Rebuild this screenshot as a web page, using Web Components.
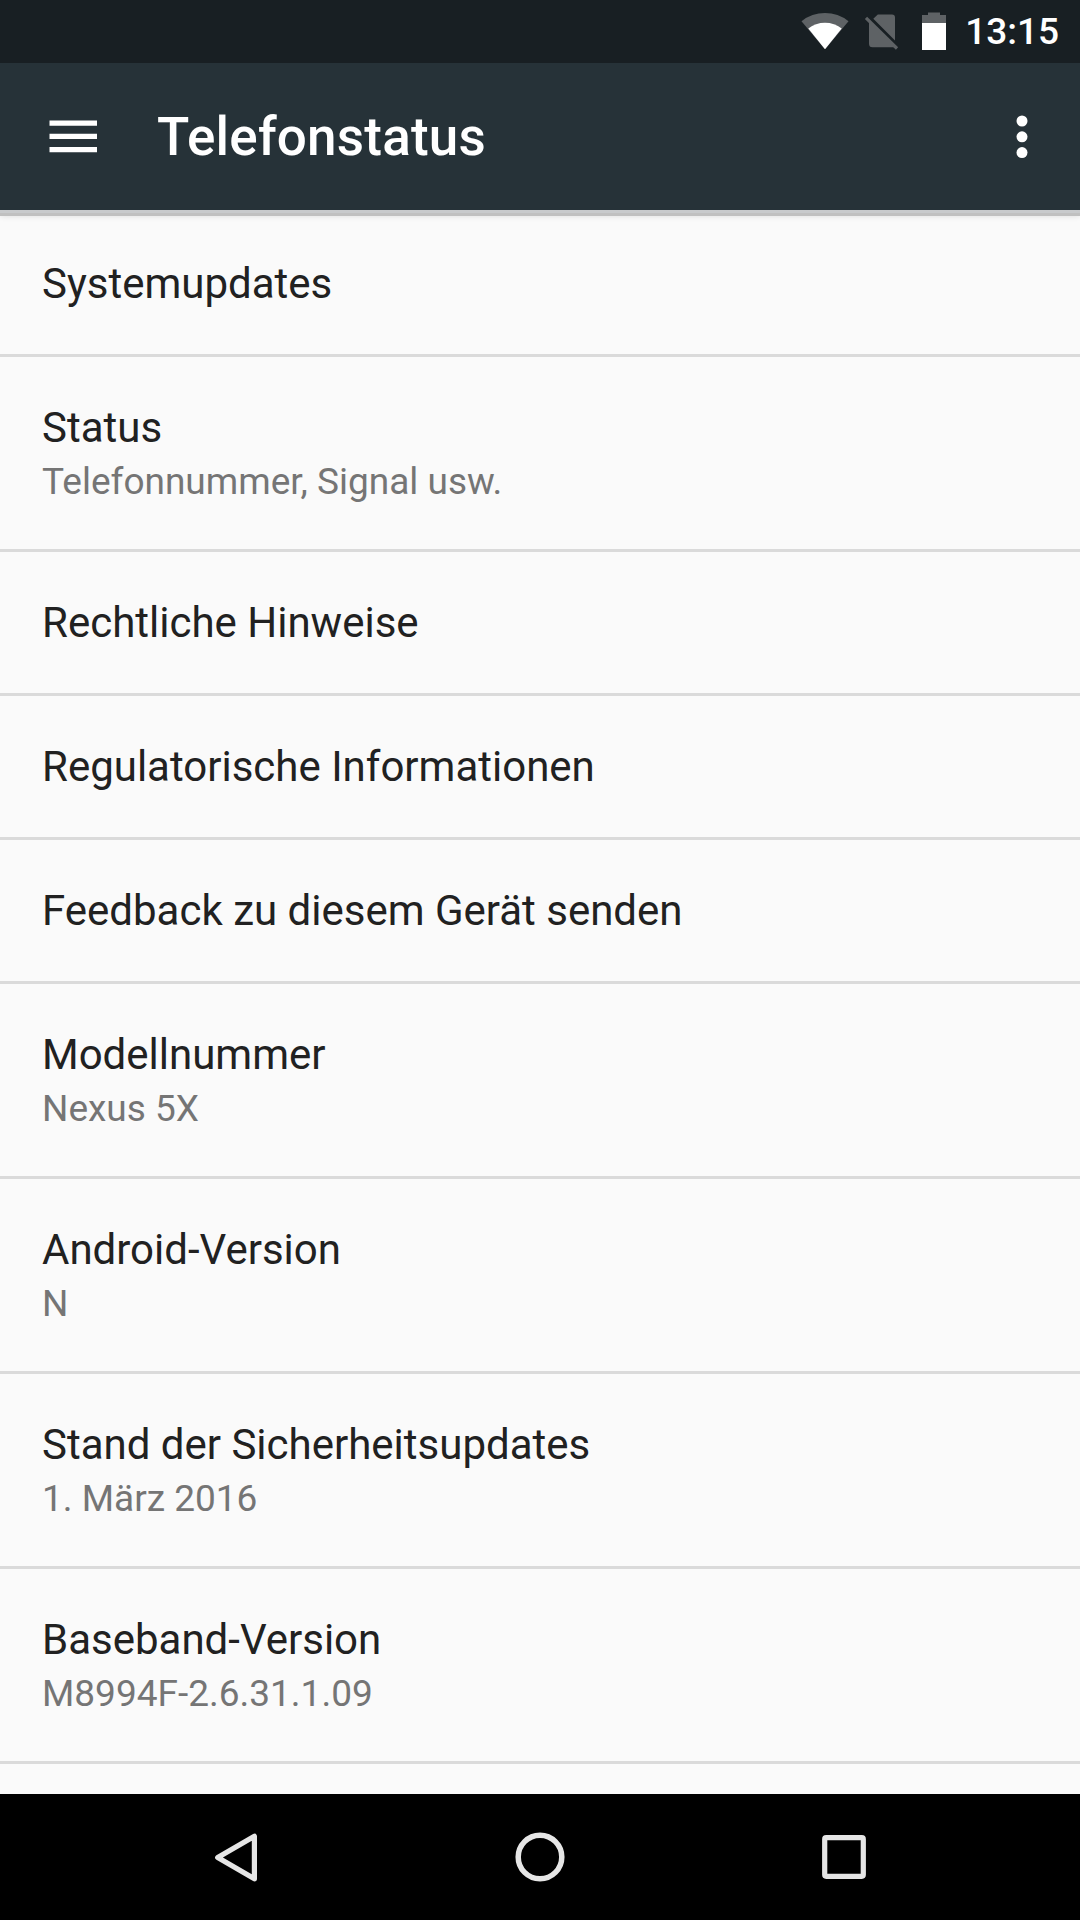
<!DOCTYPE html>
<html lang="de">
<head>
<meta charset="utf-8">
<title>Telefonstatus</title>
<style>
    body {
        margin: 0;
        font-family: Roboto, "Noto Sans", sans-serif;
    }
</style>
</head>
<body>
<phone-screen>
    <status-bar slot="status">13:15</status-bar>
    <app-bar slot="header">Telefonstatus</app-bar>
    <pref-item>Systemupdates</pref-item>
    <pref-item summary="Telefonnummer, Signal usw.">Status</pref-item>
    <pref-item>Rechtliche Hinweise</pref-item>
    <pref-item>Regulatorische Informationen</pref-item>
    <pref-item>Feedback zu diesem Gerät senden</pref-item>
    <pref-item summary="Nexus 5X">Modellnummer</pref-item>
    <pref-item summary="N">Android-Version</pref-item>
    <pref-item summary="1. März 2016">Stand der Sicherheitsupdates</pref-item>
    <pref-item summary="M8994F-2.6.31.1.09">Baseband-Version</pref-item>
    <nav-bar slot="nav"></nav-bar>
</phone-screen>

<script>
class PhoneScreen extends HTMLElement {

    constructor() {
        super();
        this.attachShadow({mode: 'open'});
        this.shadowRoot.innerHTML = `
            <style>
                :host {
                    display: flex;
                    flex-direction: column;
                    width: 1080px;
                    height: 1920px;
                    overflow: hidden;
                    background: #fafafa;
                }

                main {
                    flex: 1;
                    min-height: 0;
                    overflow: hidden;
                    padding-top: 3px;
                }
            </style>
            <slot name="status"></slot>
            <slot name="header"></slot>
            <main><slot></slot></main>
            <slot name="nav"></slot>
        `;
    }
}

class StatusBar extends HTMLElement {

    constructor() {
        super();
        this.attachShadow({mode: 'open'});
        this.shadowRoot.innerHTML = `
            <style>
                :host {
                    display: flex;
                    flex: none;
                    justify-content: flex-end;
                    height: 63px;
                    box-sizing: border-box;
                    padding-right: 21px;
                    background: #181f23;
                    color: #fff;
                    font-size: 37px;
                    font-weight: 500;
                    line-height: 63px;
                }

                svg {
                    display: block;
                    margin-right: 15px;
                }
            </style>
            <svg width="150" height="63" viewBox="0 0 150 63">
                <!-- wifi -->
                <path d="M1.5 21.2a37.4 37.4 0 0 1 47 0L25 49.3z" fill="#5e6265"/>
                <path d="M8.3 28.6a26.5 26.5 0 0 1 33.4 0L25 49.3z" fill="#fff"/>
                <!-- no sim -->
                <path d="M73.3 18.7 77.8 14.5H92a3 3 0 0 1 3 3V40.4zM69 21 95 47.2H72.5a3.5 3.5 0 0 1-3.5-3.5z" fill="#5e6265"/>
                <path d="M66 17.8 97 48.5" stroke="#5e6265" stroke-width="3.2"/>
                <!-- battery -->
                <path d="M128 12.5h12V15h6v8h-24V15h6z" fill="#5e6265"/>
                <path d="M122 23h24v27h-24z" fill="#fff"/>
            </svg>
            <slot></slot>
        `;
    }
}

class AppBar extends HTMLElement {

    constructor() {
        super();
        this.attachShadow({mode: 'open'});
        this.shadowRoot.innerHTML = `
            <style>
                :host {
                    display: flex;
                    flex: none;
                    align-items: center;
                    height: 147px;
                    box-sizing: border-box;
                    padding: 0 52px 0 49px;
                    background: #263238;
                    box-shadow: 0 3px 0 #c8cacc, 0 6px 0 #c0c0c0, 0 6px 6px rgba(0, 0, 0, 0.12);
                    color: #fff;
                }

                svg {
                    display: block;
                }

                h1 {
                    flex: 1;
                    margin: 0 0 0 60px;
                    font-size: 53px;
                    font-weight: 500;
                    line-height: 62px;
                    letter-spacing: 0.2px;
                }
            </style>
            <svg width="48" height="33" fill="#fff">
                <path d="M.5 .5h48v5.3H.5zM.5 13.8h48V19H.5zM.5 27h48v5.3H.5z"/>
            </svg>
            <h1><slot></slot></h1>
            <svg width="12" height="44" fill="#fff">
                <circle cx="6" cy="6" r="5.5"/>
                <circle cx="6" cy="21.8" r="5.5"/>
                <circle cx="6" cy="37.6" r="5.5"/>
            </svg>
        `;
    }
}

class PrefItem extends HTMLElement {

    constructor() {
        super();
        this.attachShadow({mode: 'open'});
    }

    connectedCallback() {
        this._render();
    }

    static get observedAttributes() {
        return ['summary'];
    }

    attributeChangedCallback() {
        this._render();
    }

    _render() {
        const summary = this.getAttribute('summary');
        this.shadowRoot.innerHTML = `
            <style>
                :host {
                    display: block;
                    box-sizing: border-box;
                    height: ${summary ? 195 : 144}px;
                    padding: 46px 42px 0;
                    border-bottom: 3px solid #dadada;
                }

                .title {
                    color: #212121;
                    font-size: 42px;
                    line-height: 50px;
                }

                .summary {
                    margin-top: 4px;
                    color: #757575;
                    font-size: 37px;
                    line-height: 50px;
                }
            </style>
            <div class="title"><slot></slot></div>
            ${summary ? `<div class="summary">${summary}</div>` : ''}
        `;
    }
}

class NavBar extends HTMLElement {

    constructor() {
        super();
        this.attachShadow({mode: 'open'});
        this.shadowRoot.innerHTML = `
            <style>
                :host {
                    display: flex;
                    flex: none;
                    justify-content: space-between;
                    align-items: center;
                    height: 126px;
                    box-sizing: border-box;
                    padding: 0 206px;
                    background: #000;
                }

                svg {
                    display: block;
                    fill: none;
                    stroke: #e6e6e6;
                    stroke-linejoin: round;
                }
            </style>
            <svg width="60" height="60">
                <path d="M11.7 30.5 48.4 9.2V51.8z" stroke-width="5.2"/>
            </svg>
            <svg width="60" height="60">
                <circle cx="30" cy="30" r="21.8" stroke-width="5.5"/>
            </svg>
            <svg width="60" height="60">
                <rect x="10.7" y="10.7" width="38.6" height="38.6" rx="1.5" stroke-width="5.2"/>
            </svg>
        `;
    }
}

customElements.define('phone-screen', PhoneScreen);
customElements.define('status-bar', StatusBar);
customElements.define('app-bar', AppBar);
customElements.define('pref-item', PrefItem);
customElements.define('nav-bar', NavBar);
</script>
</body>
</html>
